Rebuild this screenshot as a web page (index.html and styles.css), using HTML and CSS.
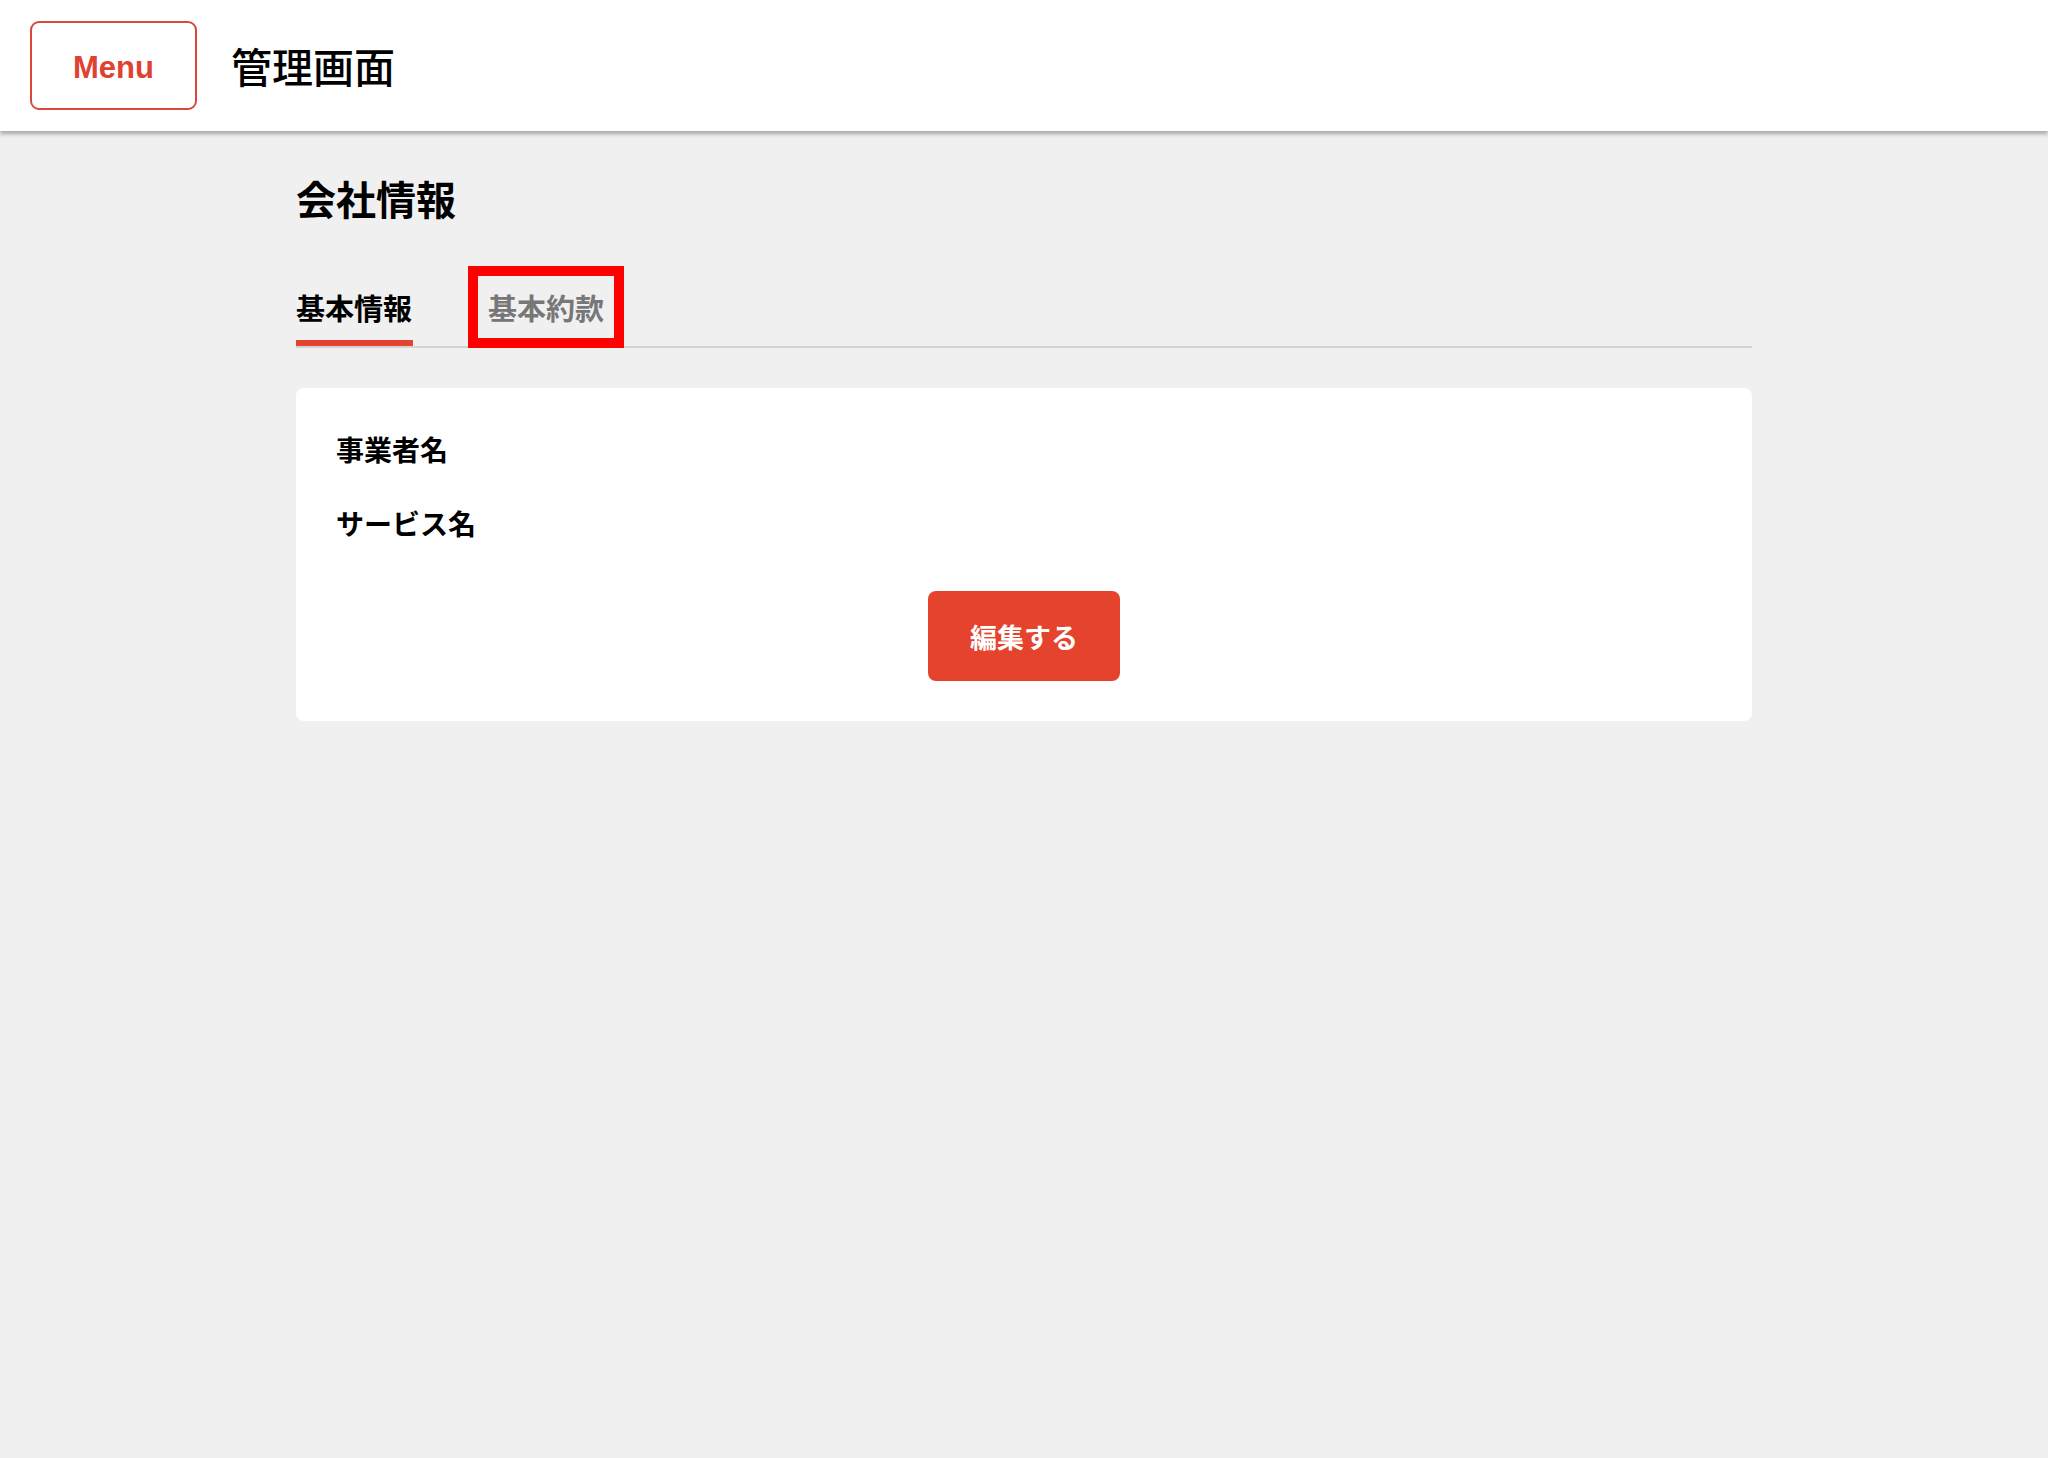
FILE: index.html
```html
<!DOCTYPE html>
<html lang="ja">
<head>
    <meta charset="UTF-8">
    <meta name="viewport" content="width=device-width, initial-scale=1.0">
    <title>管理画面</title>
    <link rel="stylesheet" href="styles.css">
</head>
<body>
    <header class="site-header">
        <button class="menu-btn">Menu</button>
        <div class="site-title">管理画面</div>
    </header>
    <main class="container">
        <h1 class="page-title">会社情報</h1>
        <nav class="tabs">
            <div class="tab active">基本情報</div>
            <div class="tab marked">基本約款</div>
        </nav>
        <section class="card">
            <div class="field">事業者名</div>
            <div class="field">サービス名</div>
            <div class="actions">
                <button class="edit-btn">編集する</button>
            </div>
        </section>
    </main>
</body>
</html>
```

FILE: styles.css
```css
body {
    margin: 0;
    background-color: #f0f0f0;
    font-family: "Noto Sans CJK JP", "Liberation Sans", sans-serif;
    color: #000;
}
.site-header {
    display: flex;
    align-items: center;
    height: 131px;
    padding-left: 30px;
    background: #fff;
    box-shadow: 0 3px 4px rgba(0, 0, 0, 0.3);
}
.menu-btn {
    width: 167px;
    height: 89px;
    margin-right: 34px;
    padding-top: 6px;
    background: #fff;
    border: 2px solid #d9483b;
    border-radius: 9px;
    color: #e04232;
    font-family: "Liberation Sans", Arial, sans-serif;
    font-weight: bold;
    font-size: 31px;
    cursor: pointer;
}
.site-title {
    font-size: 41px;
    font-weight: 500;
    line-height: 1;
}
.container {
    width: 1456px;
    margin: 0 auto;
    padding-top: 37px;
}
.page-title {
    margin: 0 0 58px;
    font-size: 40px;
    line-height: 60px;
    font-weight: bold;
}
.tabs {
    display: flex;
    gap: 74px;
    border-bottom: 2px solid #d4d4d4;
}
.tab {
    position: relative;
    font-size: 29px;
    line-height: 42px;
    font-weight: bold;
    color: #777;
    padding-bottom: 12px;
    border-bottom: 6px solid transparent;
    margin-left: 1px;
}
.tab.active {
    color: #000;
    border-bottom-color: #e5432e;
    margin-left: 0;
    padding-right: 1px;
}
.tab.marked::after {
    content: "";
    position: absolute;
    top: -20px;
    bottom: -8px;
    left: -20px;
    right: -20px;
    border: 10px solid #ff0000;
}
.card {
    margin-top: 40px;
    background: #fff;
    border-radius: 8px;
    padding: 40px 40px 40px;
}
.field {
    font-size: 28px;
    line-height: 42px;
    font-weight: bold;
    margin-bottom: 32px;
}
.field:last-of-type {
    margin-bottom: 0;
}
.actions {
    text-align: center;
    margin-top: 47px;
}
.edit-btn {
    width: 192px;
    height: 90px;
    background: #e5432e;
    border: none;
    border-radius: 8px;
    color: #fff;
    font-family: "Noto Sans CJK JP", sans-serif;
    font-size: 27px;
    font-weight: bold;
    cursor: pointer;
}
```
